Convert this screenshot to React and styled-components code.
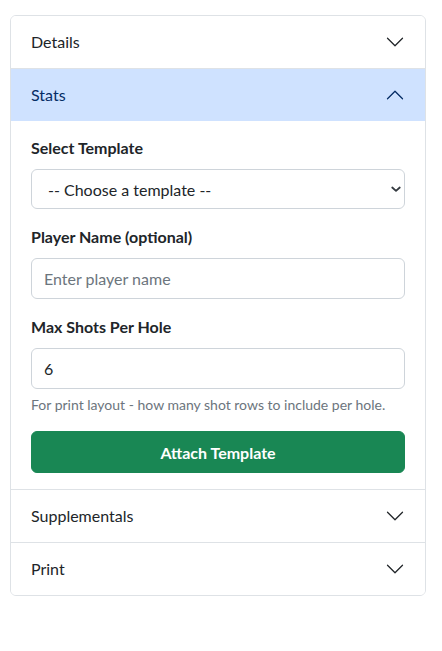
import { useState } from "react";
import styled, { createGlobalStyle } from "styled-components";

const GlobalStyle = createGlobalStyle`
	body {
		margin: 0;
		background: #fff;
		font-family: Lato, "Noto Sans", sans-serif;
		color: #212529;
	}
	* {
		box-sizing: border-box;
	}
`;

const Page = styled.div`
	padding: 15px 16px 0 10px;
`;

const Accordion = styled.div`
	border: 1px solid #dee2e6;
	border-radius: 6px;
	overflow: hidden;
	background: #fff;
`;

const Item = styled.div`
	& + & {
		border-top: 1px solid #dee2e6;
	}
`;

const Header = styled.button`
	display: flex;
	align-items: center;
	justify-content: space-between;
	width: 100%;
	border: 0;
	margin: 0;
	padding: 14px 20px;
	font: inherit;
	font-size: 16px;
	line-height: 24px;
	text-align: left;
	cursor: pointer;
	background: ${(p) => (p.$open ? "#cfe2ff" : "#fff")};
	color: ${(p) => (p.$open ? "#052c65" : "#212529")};

	svg {
		flex-shrink: 0;
		transform: ${(p) => (p.$open ? "rotate(180deg)" : "none")};
	}
`;

const Body = styled.div`
	padding: 15px 20px 16px;
`;

const Field = styled.div`
	margin-bottom: 16px;
`;

const Label = styled.label`
	display: block;
	margin-bottom: 9px;
	font-size: 16px;
	line-height: 24px;
	font-weight: 700;
	color: #212529;
`;

const Select = styled.select`
	display: block;
	width: 100%;
	height: 40px;
	padding: 0 36px 0 16px;
	font: inherit;
	font-size: 16px;
	color: #212529;
	background-color: #fff;
	background-image: url("data:image/svg+xml,%3csvg xmlns='http://www.w3.org/2000/svg' viewBox='0 0 16 16'%3e%3cpath fill='none' stroke='%23343a40' stroke-linecap='round' stroke-linejoin='round' stroke-width='2.4' d='m3 6 5 4.5 5-4.5'/%3e%3c/svg%3e");
	background-repeat: no-repeat;
	background-position: right 2px center;
	background-size: 12px 12px;
	border: 1px solid #ced4da;
	border-radius: 6px;
	appearance: none;
`;

const Input = styled.input`
	display: block;
	width: 100%;
	height: 41px;
	padding: 0 12px;
	font: inherit;
	font-size: 16px;
	color: #212529;
	background: #fff;
	border: 1px solid #ced4da;
	border-radius: 6px;

	&::placeholder {
		color: #6c757d;
		opacity: 1;
	}
`;

const Hint = styled.div`
	margin-top: 5px;
	font-size: 14px;
	line-height: 21px;
	color: #6c757d;
`;

const SubmitButton = styled.button`
	display: block;
	width: 100%;
	height: 42px;
	border: 1px solid #198754;
	border-radius: 6px;
	background: #198754;
	color: #fff;
	font: inherit;
	font-size: 16px;
	font-weight: 700;
	cursor: pointer;
`;

function Chevron() {
	return (
		<svg width="20" height="20" viewBox="0 0 16 16" fill="none">
			<path
				d="M2 5L8 11L14 5"
				stroke="currentColor"
				strokeWidth="1"
				strokeLinecap="round"
				strokeLinejoin="round"
			/>
		</svg>
	);
}

const sections = ["Details", "Stats", "Supplementals", "Print"];

export default function App() {
	const [open, setOpen] = useState("Stats");

	return (
		<Page>
			<GlobalStyle />
			<Accordion>
				{sections.map((name) => (
					<Item key={name}>
						<Header $open={open === name} onClick={() => setOpen(open === name ? null : name)}>
							<span>{name}</span>
							<Chevron />
						</Header>
						{open === name && name === "Stats" && (
							<Body>
								<Field>
									<Label>Select Template</Label>
									<Select defaultValue="">
										<option value="">-- Choose a template --</option>
									</Select>
								</Field>
								<Field>
									<Label>Player Name (optional)</Label>
									<Input placeholder="Enter player name" />
								</Field>
								<Field>
									<Label>Max Shots Per Hole</Label>
									<Input type="number" defaultValue="6" />
									<Hint>For print layout - how many shot rows to include per hole.</Hint>
								</Field>
								<SubmitButton>Attach Template</SubmitButton>
							</Body>
						)}
					</Item>
				))}
			</Accordion>
		</Page>
	);
}
